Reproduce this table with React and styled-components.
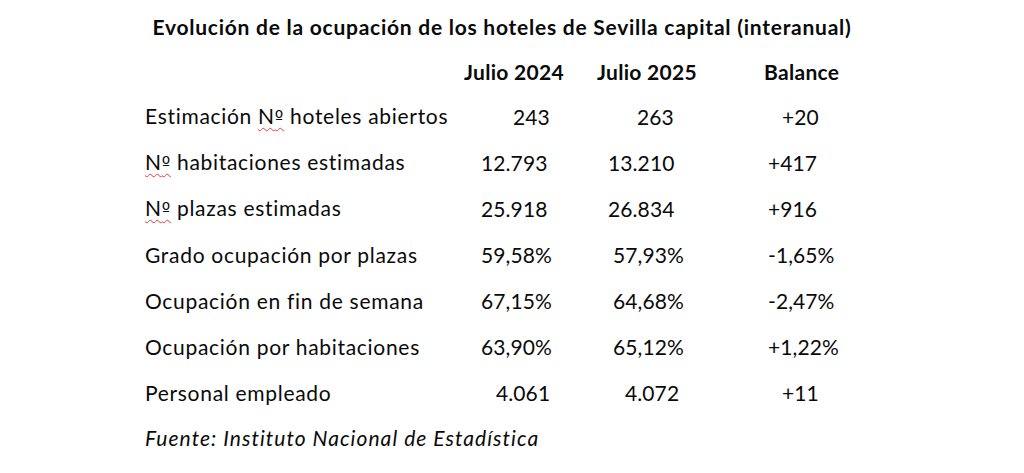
import React from 'react'
import styled, { createGlobalStyle } from 'styled-components'

const Global = createGlobalStyle`
  html, body {
    margin: 0;
    padding: 0;
    background: #ffffff;
  }
  body {
    font-family: Lato, "Open Sans", "Liberation Sans", sans-serif;
    color: #0a0a0a;
  }
`

const Page = styled.div`
  width: 1024px;
  height: 473px;
  box-sizing: border-box;
  padding-top: 13px;
  overflow: hidden;
`

const Title = styled.h1`
  margin: 0;
  padding-right: 20px;
  text-align: center;
  font-size: 21px;
  font-weight: 700;
  line-height: 28px;
  letter-spacing: 0.75px;
`

const Table = styled.div`
  display: grid;
  grid-template-columns: 315px 135px 165px 120px;
  grid-template-rows: 44px;
  grid-auto-rows: 46px;
  align-items: center;
  padding-left: 145px;
  margin-top: 9px;
`

const Cell = styled.div`
  font-size: 21px;
  line-height: 26px;
  white-space: nowrap;
  padding-left: ${p => p.indent || 0}px;
  font-weight: ${p => (p.head ? 700 : 400)};
  letter-spacing: ${p => (p.head ? 0.3 : p.label ? 0.7 : 0.1)}px;
`

const Flag = styled.span`
  text-decoration: underline wavy #e0393e;
  text-decoration-thickness: 1px;
  text-underline-offset: 3px;
`

const Ord = styled.span`
  font-family: "DejaVu Sans", sans-serif;
  font-size: 18px;
`

const Source = styled.p`
  margin: 9px 0 0;
  padding-left: 145px;
  font-size: 21px;
  font-style: italic;
  line-height: 26px;
  letter-spacing: 1.05px;
`

const rows = [
  { label: ['Estimación ', ' hoteles abiertos'], vals: ['243', '263', '+20'], ind: [53, 42, 22] },
  { label: ['', ' habitaciones estimadas'], vals: ['12.793', '13.210', '+417'], ind: [21, 13, 8] },
  { label: ['', ' plazas estimadas'], vals: ['25.918', '26.834', '+916'], ind: [21, 13, 8] },
  { label: ['Grado ocupación por plazas'], vals: ['59,58%', '57,93%', '-1,65%'], ind: [21, 18, 8] },
  { label: ['Ocupación en fin de semana'], vals: ['67,15%', '64,68%', '-2,47%'], ind: [21, 18, 8] },
  { label: ['Ocupación por habitaciones'], vals: ['63,90%', '65,12%', '+1,22%'], ind: [21, 18, 8] },
  { label: ['Personal empleado'], vals: ['4.061', '4.072', '+11'], ind: [36, 30, 22] },
]

function Label({ parts }) {
  if (parts.length === 1) return parts[0]
  return (
    <>
      {parts[0]}
      <Flag>N<Ord>º</Ord></Flag>
      {parts[1]}
    </>
  )
}

export default function App() {
  return (
    <Page>
      <Global />
      <Title>Evolución de la ocupación de los hoteles de Sevilla capital (interanual)</Title>
      <Table>
        <Cell />
        <Cell head indent={4}>Julio 2024</Cell>
        <Cell head indent={2}>Julio 2025</Cell>
        <Cell head indent={4}>Balance</Cell>
        {rows.map((r, i) => (
          <React.Fragment key={i}>
            <Cell label><Label parts={r.label} /></Cell>
            {r.vals.map((v, j) => (
              <Cell key={j} indent={r.ind[j]}>{v}</Cell>
            ))}
          </React.Fragment>
        ))}
      </Table>
      <Source>Fuente: Instituto Nacional de Estadística</Source>
    </Page>
  )
}
